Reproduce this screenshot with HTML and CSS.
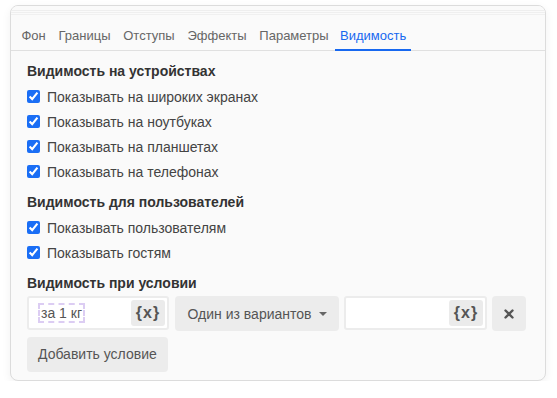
FILE: index.html
```html
<!DOCTYPE html>
<html lang="ru">
<head>
    <meta charset="UTF-8">
    <title>Видимость</title>
    <link rel="stylesheet" href="styles.css">
</head>
<body>
    <div class="panel">
        <div class="tabs">
            <span class="tab">Фон</span>
            <span class="tab">Границы</span>
            <span class="tab">Отступы</span>
            <span class="tab">Эффекты</span>
            <span class="tab">Параметры</span>
            <span class="tab active">Видимость</span>
        </div>

        <div class="content">
            <div class="group">
                <div class="group-title">Видимость на устройствах</div>
                <label class="check"><input type="checkbox" checked> Показывать на широких экранах</label>
                <label class="check"><input type="checkbox" checked> Показывать на ноутбуках</label>
                <label class="check"><input type="checkbox" checked> Показывать на планшетах</label>
                <label class="check"><input type="checkbox" checked> Показывать на телефонах</label>
            </div>

            <div class="group">
                <div class="group-title">Видимость для пользователей</div>
                <label class="check"><input type="checkbox" checked> Показывать пользователям</label>
                <label class="check"><input type="checkbox" checked> Показывать гостям</label>
            </div>

            <div class="group">
                <div class="group-title">Видимость при условии</div>
                <div class="cond-row">
                    <div class="field">
                        <span class="tag">за 1 кг</span>
                        <span class="var-btn">{x}</span>
                    </div>
                    <div class="select-btn">Один из вариантов <span class="caret"></span></div>
                    <div class="field field-wide">
                        <span class="tag empty"></span>
                        <span class="var-btn">{x}</span>
                    </div>
                    <div class="remove-btn">
                        <svg width="10" height="10" viewBox="0 0 10 10">
                            <path d="M1.5 1.5 L8.5 8.5 M8.5 1.5 L1.5 8.5" stroke="#555" stroke-width="2.4" stroke-linecap="round"/>
                        </svg>
                    </div>
                </div>
                <div class="add-btn">Добавить условие</div>
            </div>
        </div>
    </div>
</body>
</html>
```

FILE: styles.css
```css
/* панель настроек видимости */
body {
    margin: 0;
    padding: 5px 0 0 10px;
    font-family: 'Liberation Sans', Arial, sans-serif;
    font-size: 14px;
    color: #333;
    background-color: #fff;
}
.panel {
    width: 534px;
    height: 374px;
    background-color: #fafafa;
    border: 1px solid #dcdcdc;
    border-radius: 8px;
    box-shadow: 0 3px 10px rgba(0, 0, 0, 0.06);
    overflow: hidden;
}
.tabs {
    display: flex;
    padding: 0 4px;
    border-bottom: 1px solid #e0e0e0;
    background-image: linear-gradient(#fafafa 4px, #eeeeee 4px, #eeeeee 5px, #fafafa 5px, #fafafa 6px, #efefef 6px, #efefef 7px, #fafafa 7px, #fafafa 8px, #f0f0f0 8px, #f0f0f0 9px, #fafafa 9px);
}
.tab {
    padding: 22px 6.4px 6px;
    line-height: 15px;
    font-size: 13px;
    color: #666;
    border-bottom: 2px solid transparent;
    margin-bottom: -1px;
}
.tab.active {
    color: #1768f0;
    border-bottom-color: #1768f0;
    padding: 22px 5px 6px;
}
.content {
    padding: 11px 16px 0 16px;
}
.group + .group {
    margin-top: 9px;
}
.group-title {
    font-weight: bold;
    line-height: 18px;
    margin-bottom: 4px;
    color: #333;
}
.check {
    display: flex;
    align-items: center;
    height: 25px;
    color: #444;
}
.check input {
    width: 13px;
    height: 13px;
    margin: 0 7px 0 0;
    accent-color: #1a6ef5;
}
.cond-row {
    display: flex;
    align-items: flex-start;
    margin-bottom: 6px;
}
.field {
    width: 127px;
    height: 30px;
    border: 2px solid #ececec;
    border-radius: 3px;
    background-color: #fff;
    display: flex;
    align-items: center;
    justify-content: space-between;
    padding: 0 2px 0 9px;
}
.field-wide {
    width: 128px;
}
.tag {
    border: 2px dashed #dccdf3;
    padding: 0 1px;
    line-height: 16px;
    color: #555;
}
.tag.empty {
    border: none;
}
.var-btn {
    width: 34px;
    height: 26px;
    line-height: 26px;
    text-align: center;
    background-color: #ebebeb;
    border-radius: 3px;
    font-weight: bold;
    font-size: 16px;
    letter-spacing: 1px;
    color: #555;
}
.select-btn {
    width: 164px;
    height: 35px;
    margin: 0 5px 0 6px;
    background-color: #ececec;
    border-radius: 4px;
    display: flex;
    align-items: center;
    justify-content: center;
    color: #555;
    box-sizing: border-box;
}
.caret {
    display: inline-block;
    margin-left: 7px;
    border-left: 4px solid transparent;
    border-right: 4px solid transparent;
    border-top: 4px solid #666;
}
.remove-btn {
    width: 34px;
    height: 35px;
    margin-left: 5px;
    background-color: #ececec;
    border-radius: 4px;
    display: flex;
    align-items: center;
    justify-content: center;
}
.add-btn {
    display: inline-block;
    padding: 0 11px;
    height: 35px;
    line-height: 35px;
    background-color: #ececec;
    border-radius: 4px;
    color: #555;
}
```
